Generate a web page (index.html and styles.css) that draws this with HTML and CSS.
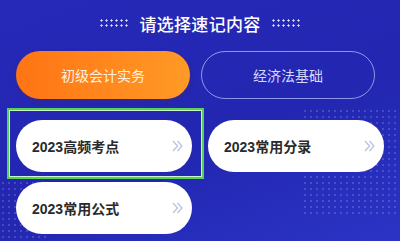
FILE: index.html
```html
<!DOCTYPE html>
<html lang="zh-CN">
<head>
  <meta charset="UTF-8" />
  <meta name="viewport" content="width=device-width, initial-scale=1.0"/>
  <title>请选择速记内容</title>
  <link rel="stylesheet" href="styles.css">
</head>
<body>
  <div class="page">
    <div class="bg-dots bg-dots-right"></div>
    <div class="bg-dots bg-dots-left"></div>

    <header class="title-row">
      <span class="dots"></span>
      <h1>请选择速记内容</h1>
      <span class="dots"></span>
    </header>

    <div class="tabs">
      <button class="tab active">初级会计实务</button>
      <button class="tab">经济法基础</button>
    </div>

    <div class="cards">
      <a class="card" href="#">
        <span>2023高频考点</span>
        <svg class="arrow" viewBox="0 0 11 12" width="11" height="12"><polyline points="1,1 5.5,6 1,11"/><polyline points="5.5,1 10,6 5.5,11"/></svg>
      </a>
      <a class="card" href="#">
        <span>2023常用分录</span>
        <svg class="arrow" viewBox="0 0 11 12" width="11" height="12"><polyline points="1,1 5.5,6 1,11"/><polyline points="5.5,1 10,6 5.5,11"/></svg>
      </a>
      <a class="card" href="#">
        <span>2023常用公式</span>
        <svg class="arrow" viewBox="0 0 11 12" width="11" height="12"><polyline points="1,1 5.5,6 1,11"/><polyline points="5.5,1 10,6 5.5,11"/></svg>
      </a>
    </div>

    <div class="focus-box"></div>
  </div>
</body>
</html>
```

FILE: styles.css
```css
body {
  margin: 0;
  font-family: "Noto Sans CJK SC", "Noto Sans", sans-serif;
}

.page {
  position: relative;
  width: 400px;
  height: 241px;
  overflow: hidden;
  padding: 0 16px;
  box-sizing: border-box;
  background: linear-gradient(160deg, #2629b8 0%, #2226b0 55%, #2b34c6 100%);
}

.bg-dots {
  position: absolute;
  background-image: radial-gradient(circle, rgba(255,255,255,0.16) 0.9px, transparent 1.2px);
  background-size: 6px 6px;
}

.bg-dots-right {
  right: 0;
  top: 108px;
  width: 98px;
  height: 110px;
}

.bg-dots-left {
  left: 0;
  top: 180px;
  width: 50px;
  height: 61px;
}

.title-row {
  position: relative;
  height: 46px;
  display: flex;
  align-items: center;
  justify-content: center;
  gap: 10px;
}

.title-row h1 {
  margin: 0;
  color: #fff;
  font-size: 17px;
  font-weight: 500;
  letter-spacing: 0.3px;
}

.dots {
  width: 30px;
  height: 10px;
  background-image: radial-gradient(circle, rgba(255,255,255,0.85) 0.9px, transparent 1.3px);
  background-size: 5px 5px;
}

.tabs {
  position: relative;
  display: grid;
  grid-template-columns: 174px 174px;
  column-gap: 11px;
  margin-top: 5px;
}

.tab {
  height: 48px;
  border-radius: 24px;
  border: 1px solid rgba(190,196,255,0.7);
  background: transparent;
  color: #d6daff;
  font-family: inherit;
  font-size: 14px;
}

.tab.active {
  border: none;
  background: linear-gradient(90deg, #ff7414, #ff9a26);
  color: #fff1e0;
  box-shadow: 0 2px 4px rgba(120,40,0,0.25);
}

.cards {
  position: relative;
  display: grid;
  grid-template-columns: 176px 176px;
  column-gap: 16px;
  row-gap: 10px;
  margin-top: 21px;
}

.card {
  height: 52px;
  border-radius: 26px;
  background: #fff;
  display: flex;
  align-items: center;
  justify-content: space-between;
  padding: 0 9px 0 16px;
  color: #2a2a2a;
  font-family: "Liberation Sans", "Noto Sans CJK SC", sans-serif;
  font-size: 14px;
  font-weight: 700;
  text-decoration: none;
}

.arrow {
  fill: none;
  stroke: #b7bfe2;
  stroke-width: 1.2;
}

.focus-box {
  position: absolute;
  left: 7px;
  top: 108px;
  width: 193px;
  height: 67px;
  border: 2px solid #56d356;
  box-shadow: inset 0 0 0 1px #c9f5c9;
}
```
